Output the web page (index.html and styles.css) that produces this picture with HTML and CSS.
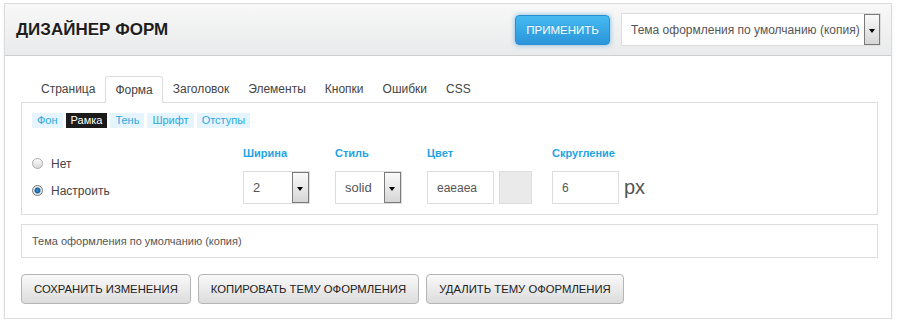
FILE: index.html
```html
<!DOCTYPE html>
<html lang="ru">
<head>
  <meta charset="UTF-8">
  <title>Дизайнер форм</title>
  <link rel="stylesheet" href="styles.css">
</head>
<body>
  <div class="panel">
    <div class="header">
      <h1 class="title">ДИЗАЙНЕР ФОРМ</h1>
      <div class="header-actions">
        <button class="apply-btn">ПРИМЕНИТЬ</button>
        <div class="select theme-select">
          <span class="select-text">Тема оформления по умолчанию (копия)</span>
          <span class="select-arrow"></span>
        </div>
      </div>
    </div>

    <div class="content">
      <ul class="tabs">
        <li>Страница</li>
        <li class="active">Форма</li>
        <li>Заголовок</li>
        <li>Элементы</li>
        <li>Кнопки</li>
        <li>Ошибки</li>
        <li>CSS</li>
      </ul>

      <div class="tab-panel">
        <div class="subtabs">
          <span>Фон</span>
          <span class="active">Рамка</span>
          <span>Тень</span>
          <span>Шрифт</span>
          <span>Отступы</span>
        </div>

        <div class="border-row">
          <div class="radios">
            <label class="radio"><span class="dot"></span>Нет</label>
            <label class="radio"><span class="dot checked"></span>Настроить</label>
          </div>

          <div class="field field-width">
            <div class="field-label">Ширина</div>
            <div class="select small-select">
              <span class="select-text">2</span>
              <span class="select-arrow"></span>
            </div>
          </div>

          <div class="field field-style">
            <div class="field-label">Стиль</div>
            <div class="select small-select">
              <span class="select-text">solid</span>
              <span class="select-arrow"></span>
            </div>
          </div>

          <div class="field field-color">
            <div class="field-label">Цвет</div>
            <div class="inline">
              <input class="text-input" value="eaeaea">
              <span class="swatch"></span>
            </div>
          </div>

          <div class="field">
            <div class="field-label">Скругление</div>
            <div class="inline">
              <input class="text-input" value="6">
              <span class="unit">px</span>
            </div>
          </div>
        </div>
      </div>

      <input class="name-input" value="Тема оформления по умолчанию (копия)">

      <div class="actions">
        <button class="gray-btn">СОХРАНИТЬ ИЗМЕНЕНИЯ</button>
        <button class="gray-btn">КОПИРОВАТЬ ТЕМУ ОФОРМЛЕНИЯ</button>
        <button class="gray-btn">УДАЛИТЬ ТЕМУ ОФОРМЛЕНИЯ</button>
      </div>
    </div>
  </div>
</body>
</html>
```

FILE: styles.css
```css
body {
  margin: 0;
  background-color: #fff;
  font-family: Arial, 'Liberation Sans', sans-serif;
  color: #444;
}
.panel {
  margin: 3px 8px 0 4px;
  border: 1px solid #dcdcdc;
  background-color: #fff;
  box-shadow: 0 2px 3px rgba(0, 0, 0, 0.08);
}
.header {
  height: 51px;
  display: flex;
  align-items: center;
  justify-content: space-between;
  padding: 0 10px 0 11px;
  background: linear-gradient(#f8f8f8, #e9eaeb);
  border-bottom: 1px solid #cfcfcf;
}
.title {
  margin: 0;
  font-size: 17px;
  font-weight: bold;
  color: #1e1e1e;
  text-shadow: 0 1px 0 #fff;
}
.header-actions {
  display: flex;
  align-items: center;
  gap: 11px;
}
.apply-btn {
  width: 95px;
  height: 30px;
  padding: 0;
  font-family: inherit;
  font-size: 11.5px;
  color: #fff;
  border: 1px solid #2a8fd0;
  border-radius: 4px;
  background: linear-gradient(#45baf0, #2b95db);
  box-shadow: 0 0 5px rgba(40, 150, 220, 0.6);
  text-shadow: 0 -1px 0 rgba(0, 0, 0, 0.1);
}
.select {
  display: flex;
  align-items: stretch;
  background-color: #fff;
  border: 1px solid #ddd;
  box-sizing: border-box;
}
.select-text {
  flex: 1;
  display: flex;
  align-items: center;
  padding-left: 9px;
  font-size: 13px;
  color: #555;
  white-space: nowrap;
  overflow: hidden;
}
.select-arrow {
  position: relative;
  width: 14px;
  border: 1px solid #7a7a7a;
  background: linear-gradient(#fafafa, #d6d6d6);
}
.select-arrow::after {
  content: '';
  position: absolute;
  left: 4px;
  top: 50%;
  margin-top: -1px;
  border-left: 3px solid transparent;
  border-right: 3px solid transparent;
  border-top: 4px solid #000;
}
.theme-select {
  width: 260px;
  height: 33px;
}
.theme-select .select-text {
  font-size: 12px;
}
.content {
  padding: 19px 13px 14px 16px;
}
.tabs {
  display: flex;
  gap: 1px;
  list-style: none;
  margin: 0;
  padding: 0 0 0 11px;
}
.tabs li {
  height: 26px;
  line-height: 26px;
  padding: 0 8px;
  font-size: 12px;
  color: #444;
  border: 1px solid transparent;
  border-bottom: none;
}
.tabs li.active {
  position: relative;
  top: 1px;
  padding: 0 9px;
  border-color: #ddd;
  border-radius: 3px 3px 0 0;
  background-color: #fff;
}
.tab-panel {
  border: 1px solid #ddd;
  padding: 10px 10px 10px 10px;
}
.subtabs {
  display: flex;
  gap: 3px;
}
.subtabs span {
  padding: 0 5px;
  height: 15px;
  line-height: 15px;
  font-size: 11px;
  color: #29a8e0;
  background-color: #e6f5fd;
}
.subtabs span.active {
  color: #fff;
  background-color: #1b1b1b;
}
.border-row {
  display: flex;
  align-items: flex-end;
  margin-top: 19px;
}
.radios {
  width: 211px;
  display: flex;
  flex-direction: column;
}
.radio {
  display: flex;
  align-items: center;
  height: 27px;
  font-size: 12px;
  color: #444;
}
.dot {
  width: 9px;
  height: 9px;
  margin-right: 8px;
  border: 1px solid #aaa;
  border-radius: 50%;
  background: linear-gradient(#fdfdfd, #d9d9d9);
}
.dot.checked {
  border-color: #777;
  background: radial-gradient(circle, #3a9be0 0, #125a92 2.5px, #f0f0f0 3.5px, #cfcfcf 100%);
}
.field-label {
  height: 16px;
  margin-bottom: 8px;
  font-size: 11px;
  font-weight: bold;
  color: #23a3e3;
}
.small-select {
  width: 67px;
  height: 33px;
}
.small-select .select-text {
  padding-left: 9px;
}
.small-select .select-arrow {
  width: 15px;
}
.field-width {
  width: 92px;
}
.field-style {
  width: 92px;
}
.field-color {
  width: 125px;
}
.inline {
  display: flex;
  align-items: center;
  gap: 5px;
}
.text-input {
  width: 67px;
  height: 33px;
  box-sizing: border-box;
  padding: 0 9px;
  border: 1px solid #ddd;
  font-family: inherit;
  font-size: 12px;
  color: #555;
}
.swatch {
  width: 33px;
  height: 33px;
  box-sizing: border-box;
  border: 1px solid #ddd;
  background-color: #eaeaea;
}
.unit {
  font-size: 20px;
  color: #555;
}
.name-input {
  display: block;
  width: 100%;
  height: 34px;
  box-sizing: border-box;
  margin-top: 9px;
  padding: 0 10px;
  border: 1px solid #ddd;
  font-family: inherit;
  font-size: 11px;
  color: #555;
}
.actions {
  display: flex;
  gap: 7px;
  margin-top: 16px;
}
.gray-btn {
  height: 30px;
  padding: 0 12px;
  font-family: inherit;
  font-size: 11.3px;
  color: #222;
  border: 1px solid #b5b5b5;
  border-radius: 4px;
  background: linear-gradient(#f9f9f9, #dcdcdc);
}
```
